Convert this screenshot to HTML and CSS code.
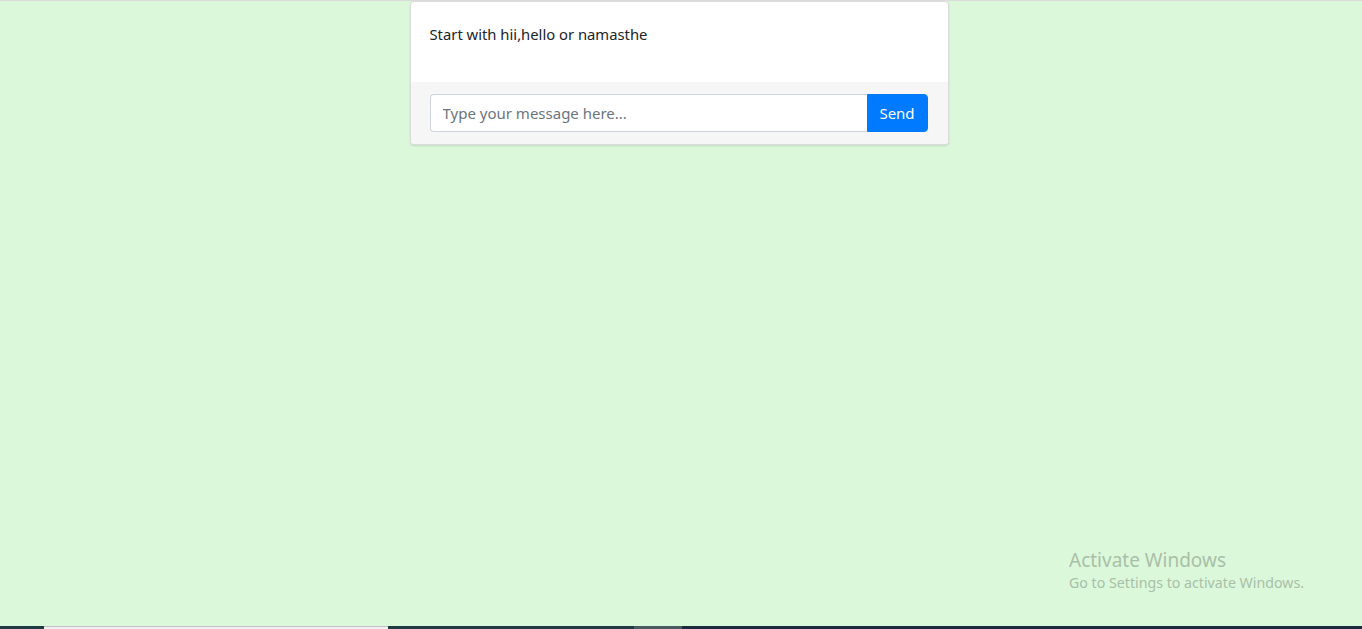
FILE: index.html
```html
<!DOCTYPE html>
<html lang="en">
<head>
<meta charset="utf-8">
<title>Chat</title>
<link rel="stylesheet" href="styles.css">
</head>
<body>
<div class="page">
  <main class="main">
    <div class="card">
      <div class="card-body">
        <p class="msg">Start with hii,hello or namasthe</p>
      </div>
      <div class="card-footer">
        <form class="input-group">
          <input class="form-control" type="text" placeholder="Type your message here...">
          <button class="btn" type="button">Send</button>
        </form>
      </div>
    </div>
  </main>
  <div class="taskbar">
    <span class="seg seg-a"></span>
    <span class="seg seg-b"></span>
    <span class="seg seg-c"></span>
    <span class="seg seg-d"></span>
    <span class="seg seg-e"></span>
  </div>
</div>
<div class="activate">
  <div class="activate-title">Activate Windows</div>
  <div class="activate-sub">Go to Settings to activate Windows.</div>
</div>
</body>
</html>
```
FILE: styles.css
```css
html, body {
  margin: 0;
  padding: 0;
  height: 100%;
}
body {
  background: #dbf8da;
  font-family: "Noto Sans", "Open Sans", sans-serif;
  color: #212529;
  overflow: hidden;
}
.page {
  height: 100vh;
  display: flex;
  flex-direction: column;
  border-top: 1px solid #dcdcdc;
  box-sizing: border-box;
}
.main {
  flex: 1;
  display: flex;
  justify-content: center;
  align-items: flex-start;
  padding-right: 4px;
}
.card {
  width: 539px;
  background: #fff;
  border: 1px solid #dcdcdc;
  border-radius: 4px;
  box-shadow: 0 1px 2px rgba(0,0,0,0.12);
  box-sizing: border-box;
  overflow: hidden;
}
.card-body {
  padding: 20px 19px;
}
.msg {
  margin: 0 0 16px;
  font-size: 14.8px;
  line-height: 24px;
}
.card-footer {
  background: #f6f6f6;
  padding: 12px 20px 12px 19px;
}
.input-group {
  display: flex;
  margin: 0;
}
.form-control {
  flex: 1;
  height: 38px;
  box-sizing: border-box;
  border: 1px solid #ced4da;
  border-right: none;
  border-radius: 4px 0 0 4px;
  padding: 6px 12px;
  font-family: inherit;
  font-size: 15px;
  color: #495057;
  background: #fff;
  outline: none;
}
.form-control::placeholder {
  color: #6c757d;
}
.btn {
  width: 61px;
  height: 38px;
  border: 1px solid #007bff;
  background: #007bff;
  color: #fff;
  border-radius: 0 4px 4px 0;
  font-family: inherit;
  font-size: 15px;
  padding: 0;
}
.taskbar {
  height: 3px;
  display: flex;
}
.seg { display: block; height: 3px; }
.seg-a { width: 44px; background: #1f3a42; }
.seg-b { width: 344px; background: #efefef; box-shadow: inset 0 1px 0 #c2c2c2; }
.seg-c { width: 246px; background: #1f3a42; }
.seg-d { width: 48px; background: #4b5c61; }
.seg-e { flex: 1; background: #1c2b3d; }
.activate {
  position: absolute;
  left: 1069px;
  top: 548px;
  color: #a9bfa8;
  font-family: "Noto Sans", sans-serif;
  pointer-events: none;
}
.activate-title {
  font-size: 19px;
  line-height: 24px;
}
.activate-sub {
  font-size: 14.2px;
  line-height: 21px;
}
```
